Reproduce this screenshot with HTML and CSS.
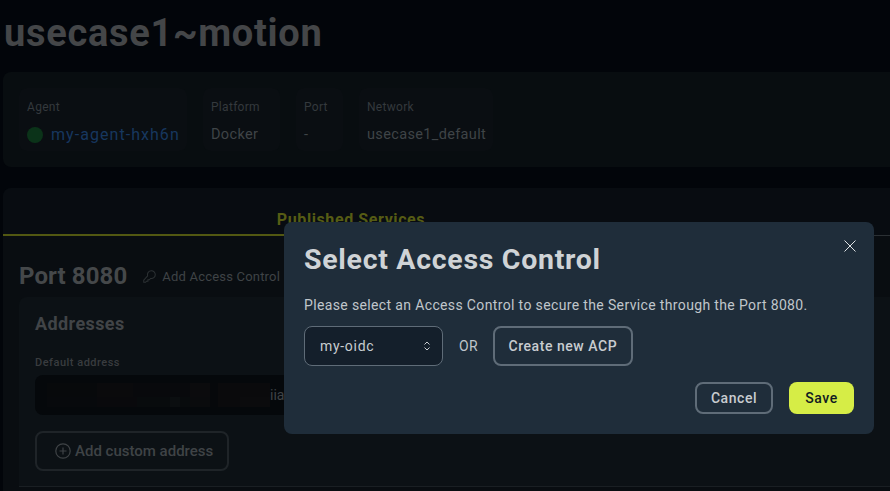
FILE: index.html
```html
<!DOCTYPE html>
<html lang="en">
<head>
    <meta charset="UTF-8">
    <meta name="viewport" content="width=device-width, initial-scale=1.0">
    <title>usecase1~motion</title>
    <link rel="stylesheet" href="styles.css">
</head>
<body>

<main class="page">
    <h1 class="page-title">usecase1~motion</h1>

    <section class="info-card">
        <div class="info-tile tile-agent">
            <span class="info-label">Agent</span>
            <span class="info-value agent"><i class="status-dot"></i><a href="#">my-agent-hxh6n</a></span>
        </div>
        <div class="info-tile tile-platform">
            <span class="info-label">Platform</span>
            <span class="info-value">Docker</span>
        </div>
        <div class="info-tile tile-port">
            <span class="info-label">Port</span>
            <span class="info-value">-</span>
        </div>
        <div class="info-tile tile-network">
            <span class="info-label">Network</span>
            <span class="info-value">usecase1_default</span>
        </div>
    </section>

    <section class="services-card">
        <div class="tabs">
            <div class="tab active">Published Services</div>
            <div class="tab"></div>
        </div>

        <div class="port-panel">
            <div class="port-head">
                <h2>Port 8080</h2>
                <a class="add-acp" href="#">
                    <svg width="13" height="13" viewBox="0 0 14 14" fill="none" stroke="currentColor" stroke-width="1.1">
                        <path d="M9 .8a4.200 4.200 0 0 1 4.200 4.200A4.200 4.200 0 0 1 8.200 9.100L6.800 10.500H5.300V12H3.800L2.800 13.200H.8V11L5 6.400A4.200 4.200 0 0 1 9 .8z"/>
                    </svg>
                    Add Access Control
                </a>
            </div>

            <div class="address-card">
                <h3>Addresses</h3>
                <label class="field-label">Default address</label>
                <div class="address-field">
                    <div class="blur-blocks"></div>
                    <span class="address-text">iia</span>
                </div>
                <button class="add-address">
                    <svg width="16" height="16" viewBox="0 0 16 16" fill="none" stroke="currentColor" stroke-width="1.2">
                        <circle cx="8" cy="8" r="7.200"/>
                        <path d="M8 4.500v7M4.500 8h7"/>
                    </svg>
                    Add custom address
                </button>
            </div>
        </div>
    </section>
</main>

<div class="modal">
    <button class="modal-close" aria-label="Close">
        <svg width="12" height="12" viewBox="0 0 12 12" fill="none" stroke="currentColor" stroke-width="1">
            <path d="M.5.5l11 11M11.500.5l-11 11"/>
        </svg>
    </button>
    <h2 class="modal-title">Select Access Control</h2>
    <p class="modal-text">Please select an Access Control to secure the Service through the Port 8080.</p>
    <div class="modal-row">
        <div class="select-wrap">
            <select>
                <option>my-oidc</option>
            </select>
            <svg width="6" height="10" viewBox="0 0 6 10" fill="none" stroke="currentColor" stroke-width="1">
                <path d="M.5 3.500L3 1l2.500 2.500M.5 6.500L3 9l2.500-2.500"/>
            </svg>
        </div>
        <span class="or">OR</span>
        <button class="btn btn-outline btn-create">Create new ACP</button>
    </div>
    <div class="modal-actions">
        <button class="btn btn-outline btn-cancel">Cancel</button>
        <button class="btn btn-primary">Save</button>
    </div>
</div>

</body>
</html>
```

FILE: styles.css
```css
* {
    box-sizing: border-box;
}

html, body {
    margin: 0;
    height: 491px;
    overflow: hidden;
}

body {
    position: relative;
    background-color: #02050a;
    font-family: Roboto, "Liberation Sans", sans-serif;
}

a {
    text-decoration: none;
}

h1, h2, h3 {
    margin: 0;
    font-weight: 700;
}

.page {
    padding: 12px 0 0 3px;
}

.page-title {
    height: 60px;
    font-size: 38px;
    line-height: 42px;
    color: #444648;
    letter-spacing: .7px;
    padding-left: 1px;
}

/* top info card */
.info-card {
    display: flex;
    gap: 16px;
    height: 95px;
    padding: 16px;
    border-radius: 8px 0 0 8px;
    background-color: #080d10;
}

.info-tile {
    display: flex;
    flex-direction: column;
    justify-content: space-between;
    height: 63px;
    padding: 12px 0 7px 8px;
    border-radius: 8px;
    background-color: #0a0e12;
}

.tile-agent { width: 168px; }
.tile-platform { width: 77px; }
.tile-port { width: 47px; }
.tile-network { width: 134px; }

.info-label {
    font-size: 12px;
    line-height: 14px;
    color: #34393d;
    letter-spacing: .3px;
}

.info-value {
    font-size: 14.5px;
    line-height: 18px;
    color: #3f4447;
    letter-spacing: .35px;
}

.info-value.agent {
    display: flex;
    align-items: center;
    gap: 8px;
    font-size: 16px;
    letter-spacing: 1.05px;
}

.agent a {
    color: #17375f;
}

.status-dot {
    width: 16px;
    height: 16px;
    border-radius: 50%;
    background-color: #0b3319;
}

/* services card */
.services-card {
    margin-top: 21px;
    height: 320px;
    border-radius: 8px 0 0 0;
    background-color: #080c11;
}

.tabs {
    display: flex;
    height: 48px;
}

.tab {
    flex: 1;
    padding-top: 23px;
    text-align: center;
    font-size: 16px;
    font-weight: 700;
    line-height: 18px;
    letter-spacing: .6px;
    border-bottom: 1px solid #2b3034;
}

.tab.active {
    flex: 0 0 696px;
    color: #565c14;
    border-bottom: 2px solid #525812;
}

.port-panel {
    padding: 26px 0 0 16px;
    background-color: #090d11;
    height: 270px;
}

.port-head {
    display: flex;
    align-items: center;
    gap: 16px;
    height: 28px;
}

.port-head h2 {
    font-size: 24px;
    line-height: 28px;
    color: #45484a;
    letter-spacing: .1px;
}

.add-acp {
    display: flex;
    align-items: center;
    gap: 6px;
    font-size: 13px;
    color: #3f4346;
    letter-spacing: .2px;
}

.add-acp svg {
    color: #2c3134;
}

.address-card {
    margin-top: 7px;
    padding: 16px;
    height: 190px;
    border-top-left-radius: 8px;
    border-bottom: 1px solid #1a1f23;
    background-color: #0c1115;
}

.address-card h3 {
    font-size: 18px;
    line-height: 22px;
    color: #414447;
    letter-spacing: .4px;
}

.field-label {
    display: block;
    margin-top: 21px;
    font-size: 11px;
    font-weight: 500;
    line-height: 14px;
    color: #393c3f;
    letter-spacing: .5px;
}

.address-field {
    display: flex;
    align-items: center;
    margin-top: 5px;
    width: 400px;
    height: 40px;
    padding-left: 12px;
    border-radius: 8px;
    background-color: #05080b;
}

/* the address is pixelated out in the screenshot */
.blur-blocks {
    flex: 0 0 223px;
    height: 24px;
    background-image:
        linear-gradient(90deg, #07090b 0 50px, #0a0a0c 50px 86px, #08090c 86px 143px, #0b0b0d 143px 163px, #06080b 163px 171px, #0a0a0c 171px),
        linear-gradient(90deg, #07090c 0 50px, #09090c 50px 90px, #080b0d 90px 123px, #0b0e10 123px 133px, #080b0d 133px 143px, #0a0b0d 143px 163px, #06080b 163px 171px, #0a0a0c 171px 193px, #0b0b0d 193px);
    background-size: 100% 14px, 100% 10px;
    background-position: top, bottom;
    background-repeat: no-repeat;
}

.address-text {
    font-size: 14px;
    color: #3f4346;
}

.add-address {
    display: flex;
    align-items: center;
    gap: 4px;
    margin-top: 16px;
    width: 194px;
    height: 40px;
    padding: 0 0 0 18px;
    border: 2px solid #1f2428;
    border-radius: 8px;
    background: none;
    font-family: inherit;
    font-size: 15px;
    font-weight: 500;
    color: #3f4346;
}

/* modal */
.modal {
    position: absolute;
    left: 284px;
    top: 222px;
    width: 590px;
    height: 212px;
    padding: 21px 20px 20px;
    border-radius: 8px;
    background-color: #1f2d3a;
    color: #c8ccd0;
}

.modal-close {
    position: absolute;
    top: 18px;
    right: 18px;
    padding: 0;
    border: 0;
    background: none;
    color: #dfe2e4;
    line-height: 0;
}

.modal-title {
    font-size: 28.5px;
    line-height: 34px;
    color: #cfd3d6;
    letter-spacing: .7px;
}

.modal-text {
    margin: 18px 0 0;
    font-size: 14px;
    line-height: 20px;
    letter-spacing: .36px;
    color: #c0c6cb;
}

.modal-row {
    display: flex;
    align-items: center;
    margin-top: 11px;
}

.select-wrap {
    position: relative;
    width: 139px;
    height: 40px;
}

.select-wrap select {
    width: 100%;
    height: 100%;
    padding: 0 0 0 15px;
    appearance: none;
    border: 1px solid #5f6c78;
    border-radius: 8px;
    background-color: #141f2b;
    font-family: inherit;
    font-size: 14px;
    letter-spacing: .7px;
    color: #c8ccd0;
}

.select-wrap svg {
    position: absolute;
    top: 15px;
    right: 13px;
    color: #c8ccd0;
}

.or {
    margin: 0 15px 0 16px;
    font-size: 14px;
    letter-spacing: .3px;
    color: #bfc5ca;
}

.btn {
    height: 32px;
    padding: 0;
    border-radius: 8px;
    font-family: inherit;
    font-size: 14px;
    font-weight: 500;
    letter-spacing: .55px;
}

.btn-outline {
    border: 2px solid #5f6c78;
    background: none;
    color: #c8ccd0;
}

.btn-create {
    width: 140px;
    height: 40px;
}

.btn-cancel {
    width: 78px;
}

.btn-primary {
    width: 65px;
    border: 0;
    background-color: #d6ed46;
    color: #111a22;
}

.modal-actions {
    display: flex;
    justify-content: flex-end;
    gap: 16px;
    margin-top: 16px;
}
```
